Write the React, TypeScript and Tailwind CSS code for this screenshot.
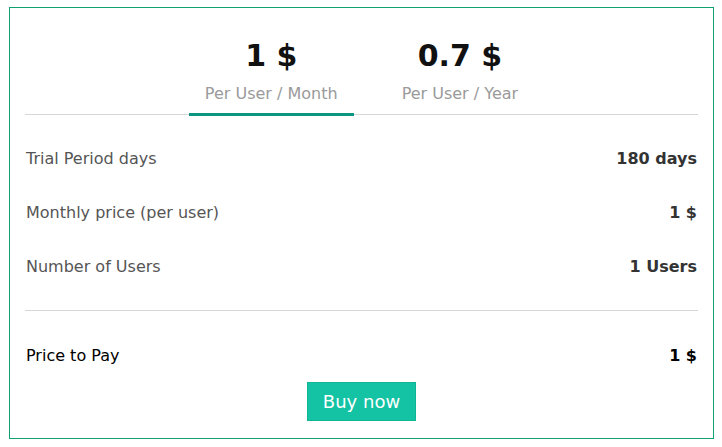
import React from "react";

const rows = [
  { label: "Trial Period days", value: "180 days" },
  { label: "Monthly price (per user)", value: "1 $" },
  { label: "Number of Users", value: "1 Users" },
];

export default function App() {
  return (
    <div className="w-[722px] h-[447px] bg-white pt-[7px] pl-[9px] font-['DejaVu_Sans',sans-serif]">
      <div className="w-[705px] h-[432px] border border-[#12a06f] px-[15px] flex flex-col">
        <div className="flex justify-center gap-[32px] border-b border-[#d6d6d6] pt-[30px]">
          <div className="px-[16px] flex flex-col items-center border-b-[3px] border-[#0b9682] mb-[-2px] pb-[7px]">
            <div className="text-[30px] leading-[36px] font-bold text-[#111]">1 $</div>
            <div className="mt-[8px] text-[16px] leading-[24px] text-[#9a9a9a]">Per User / Month</div>
          </div>
          <div className="px-[16px] flex flex-col items-center pb-[7px] mb-[-2px] border-b-[3px] border-transparent">
            <div className="text-[30px] leading-[36px] font-bold text-[#111]">0.7 $</div>
            <div className="mt-[8px] text-[16px] leading-[24px] text-[#9a9a9a]">Per User / Year</div>
          </div>
        </div>
        <div className="pt-[17px]">
          {rows.map((r) => (
            <div key={r.label} className="h-[54px] pl-[1px] pr-[1px] flex items-center justify-between">
              <span className="text-[16px] text-[#555]">{r.label}</span>
              <span className="text-[16px] font-bold text-[#333]">{r.value}</span>
            </div>
          ))}
        </div>
        <div className="mt-[16px] border-t border-[#d6d6d6]" />
        <div className="mt-[18px] h-[53px] pl-[1px] pr-[1px] flex items-center justify-between">
          <span className="text-[16px] text-black">Price to Pay</span>
          <span className="text-[16px] font-bold text-black">1 $</span>
        </div>
        <div className="flex justify-center">
          <button className="w-[109px] h-[39px] bg-[#14c2a4] border border-[#10b596] text-white text-[18px] leading-none">
            Buy now
          </button>
        </div>
      </div>
    </div>
  );
}
